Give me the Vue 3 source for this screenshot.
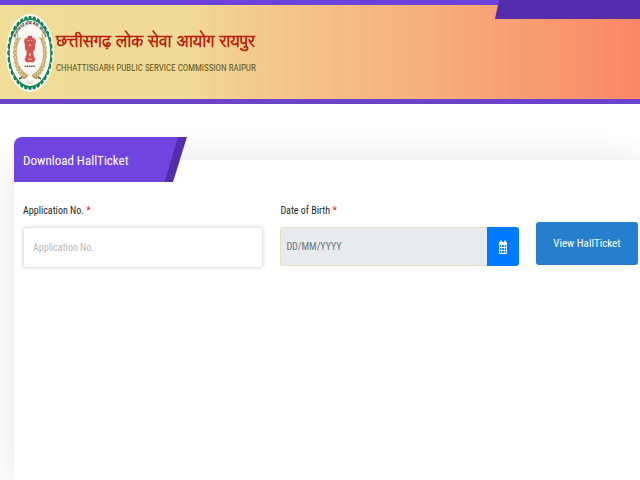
<script setup>
import { ref } from 'vue'

const applicationNo = ref('')
const birthDate = ref('')

const scallops = Array.from({ length: 32 }, (_, i) => i * 11.25)
const leaves = Array.from({ length: 12 }, (_, i) => 18 + i * 10)
</script>

<template>
  <div class="page">
    <header class="banner">
      <div class="corner"></div>
      <svg class="emblem" viewBox="0 0 100 100" preserveAspectRatio="none" role="img" aria-label="Emblem">
        <circle cx="50" cy="50" r="50" fill="#fffef6" />
        <g fill="#14865a">
          <ellipse v-for="a in scallops" :key="a" cx="50" cy="5" rx="3.6" ry="2.6" :transform="`rotate(${a} 50 50)`" />
        </g>
        <circle cx="50" cy="50" r="43.500" fill="#fffef6" stroke="#14865a" stroke-width="2.4" />
        <path id="ring" d="M15.500 62 A36.500 36.500 0 1 1 84.500 62" fill="none" />
        <text class="ring-text"><textPath href="#ring" startOffset="50%" text-anchor="middle">छत्तीसगढ़ लोक सेवा आयोग</textPath></text>
        <g fill="#c4a866">
          <g v-for="a in leaves" :key="a">
            <ellipse cx="50" cy="79" rx="4.500" ry="1.500" :transform="`rotate(${a} 50 50) rotate(28 50 79)`" />
            <ellipse cx="50" cy="83" rx="4.500" ry="1.500" :transform="`rotate(${a} 50 50) rotate(-28 50 83)`" />
            <ellipse cx="50" cy="79" rx="4.500" ry="1.500" :transform="`rotate(${-a} 50 50) rotate(-28 50 79)`" />
            <ellipse cx="50" cy="83" rx="4.500" ry="1.500" :transform="`rotate(${-a} 50 50) rotate(28 50 83)`" />
          </g>
        </g>
        <circle cx="50" cy="50" r="27" fill="#f6f6f4" stroke="#dfe0dc" />
        <g fill="#d2544c">
          <path d="M44 31 L46 28 L54 28 L56 31 L58 38 L56 46 L44 46 L42 38Z" />
          <circle cx="42" cy="35" r="4" />
          <circle cx="58" cy="35" r="4" />
          <path d="M39 37 L44 40 L44 47 L40 46Z M61 37 L56 40 L56 47 L60 46Z" />
          <rect x="43" y="46" width="14" height="7" />
          <path d="M43 52 H57 L61 58 L58 62 H42 L39 58Z" />
        </g>
        <path d="M45 34 H48 M52 34 H55 M48 40 H52 M46 58 H54" stroke="#f0bdb6" stroke-width="1.500" />
        <circle cx="50" cy="52" r="1.700" fill="#f8d9d2" />
        <path d="M39 67 H61" stroke="#6b6152" stroke-width="2" stroke-dasharray="3 1" />
        <path d="M35 83 L46 78 M65 83 L54 78" stroke="#b99a4e" stroke-width="2" />
        <path d="M27 83 L34 81 M73 83 L66 81" stroke="#464038" stroke-width="2" />
        <path d="M44 86 Q50 91 56 86" fill="none" stroke="#dedcd2" stroke-width="3" />
      </svg>
      <div class="titles">
        <h1 lang="hi">छत्तीसगढ़ लोक सेवा आयोग रायपुर</h1>
        <p>CHHATTISGARH PUBLIC SERVICE COMMISSION RAIPUR</p>
      </div>
    </header>

    <main class="card">
      <h2 class="tab">Download HallTicket</h2>
      <form class="fields" @submit.prevent>
        <div class="field">
          <label for="application">Application No. <span>*</span></label>
          <input id="application" v-model="applicationNo" class="application" type="text" placeholder="Application No." />
        </div>
        <div class="field">
          <label for="birth">Date of Birth <span>*</span></label>
          <div class="date">
            <input id="birth" v-model="birthDate" type="text" placeholder="DD/MM/YYYY" readonly />
            <button type="button" aria-label="Choose date">
              <svg viewBox="0 0 10 14" width="8" height="14" preserveAspectRatio="none">
                <path fill="#fff" fill-rule="evenodd" d="M0 3 Q0 2 1 2 H1.500 V1 Q2.500 -0.500 3.500 1 V2 H6.500 V1 Q7.500 -0.500 8.500 1 V2 H9 Q10 2 10 3 V13 Q10 14 9 14 H1 Q0 14 0 13Z M1 5 V7 H2.800 V5Z M3.800 5 V7 H6.200 V5Z M7.200 5 V7 H9 V5Z M1 8 V10 H2.800 V8Z M3.800 8 V10 H6.200 V8Z M7.200 8 V10 H9 V8Z M1 11 V13 H2.800 V11Z M3.800 11 V13 H6.200 V11Z M7.200 11 V13 H9 V11Z" />
              </svg>
            </button>
          </div>
        </div>
        <button class="view" type="submit">View HallTicket</button>
      </form>
    </main>
  </div>
</template>

<style>
body {
  margin: 0;
  background: #fff;
}
</style>

<style scoped>
* {
  box-sizing: border-box;
}

.page {
  min-height: 100vh;
  display: flex;
  flex-direction: column;
  overflow: hidden;
  font-family: "Roboto Condensed", "Liberation Sans Narrow", Roboto, sans-serif;
  color: #212529;
}

.banner {
  position: relative;
  display: flex;
  align-items: center;
  gap: 2px;
  height: 104px;
  padding: 2px 6px 0;
  border-top: 5px solid #6b42dc;
  border-bottom: 5px solid #6b42cc;
  background: linear-gradient(90deg, #f0dd98 0%, #f0db97 28%, #f4c88a 42%, #f5ae7c 68%, #fa8768 100%);
}

.corner {
  position: absolute;
  top: -5px;
  right: 0;
  width: 145px;
  height: 19px;
  background: #532dab;
  clip-path: polygon(4px 0, 100% 0, 100% 100%, 0 100%);
}

.emblem {
  flex: none;
  width: 48px;
  height: 78px;
}

.ring-text {
  font: bold 7px "Noto Sans Devanagari", "Noto Sans", sans-serif;
  fill: #464038;
}

.titles h1 {
  margin: 0;
  font: 700 16px/30px "Lohit Devanagari", "Noto Sans Devanagari", sans-serif;
  color: #b8200d;
  white-space: nowrap;
}

.titles p {
  margin: 0;
  font-size: 9px;
  line-height: 22px;
  color: #62551a;
  white-space: nowrap;
}

.card {
  flex: 1;
  margin: 56px 0 0 14px;
  border-radius: 8px 0 0 0;
  background: #fff;
  box-shadow: 0 0 36px rgba(0, 0, 0, 0.11);
}

.tab {
  width: 173px;
  margin: -23px 0 0;
  padding: 0 9px;
  border-radius: 8px 0 0 0;
  background: linear-gradient(107deg, #6f44df 0 157px, #532dab 157px);
  clip-path: polygon(0 0, 100% 0, 159px 100%, 0 100%);
  color: #fff;
  font-size: 13px;
  font-weight: 400;
  line-height: 47px;
  height: 45px;
}

.fields {
  display: grid;
  grid-template-columns: 240fr 238fr 102fr;
  column-gap: 17px;
  align-items: start;
  padding: 20px 2px 0 9px;
}

.field {
  min-width: 0;
}

.field label {
  display: block;
  margin-bottom: 7px;
  font-size: 10px;
  line-height: 18px;
}

.field label span {
  color: #e0202c;
}

input {
  min-width: 0;
  width: 100%;
  font: inherit;
  font-size: 10px;
  outline: 0;
}

.application {
  display: block;
  height: 41px;
  padding: 0 9px;
  border: 1px solid #e6e6e6;
  border-radius: 3px;
  background: #fff;
  box-shadow: 0 0 4px rgba(0, 0, 0, 0.14);
}

.application::placeholder {
  color: #b8b8b8;
  opacity: 1;
}

.date {
  display: flex;
  height: 39px;
}

.date input {
  flex: 1;
  padding: 0 5px;
  border: 1px solid #e5dfc4;
  border-right: 0;
  border-radius: 3px 0 0 3px;
  background: #e8ebee;
}

.date input::placeholder {
  color: #6c757d;
  opacity: 1;
}

.date button {
  display: flex;
  align-items: center;
  justify-content: center;
  width: 32px;
  padding: 0;
  border: 0;
  border-radius: 0 3px 3px 0;
  background: #007bff;
}

.view {
  height: 43px;
  margin-top: 20px;
  padding: 0;
  border: 0;
  border-radius: 3px;
  background: #257fce;
  color: #fff;
  font: inherit;
  font-size: 11px;
  white-space: nowrap;
}
</style>
